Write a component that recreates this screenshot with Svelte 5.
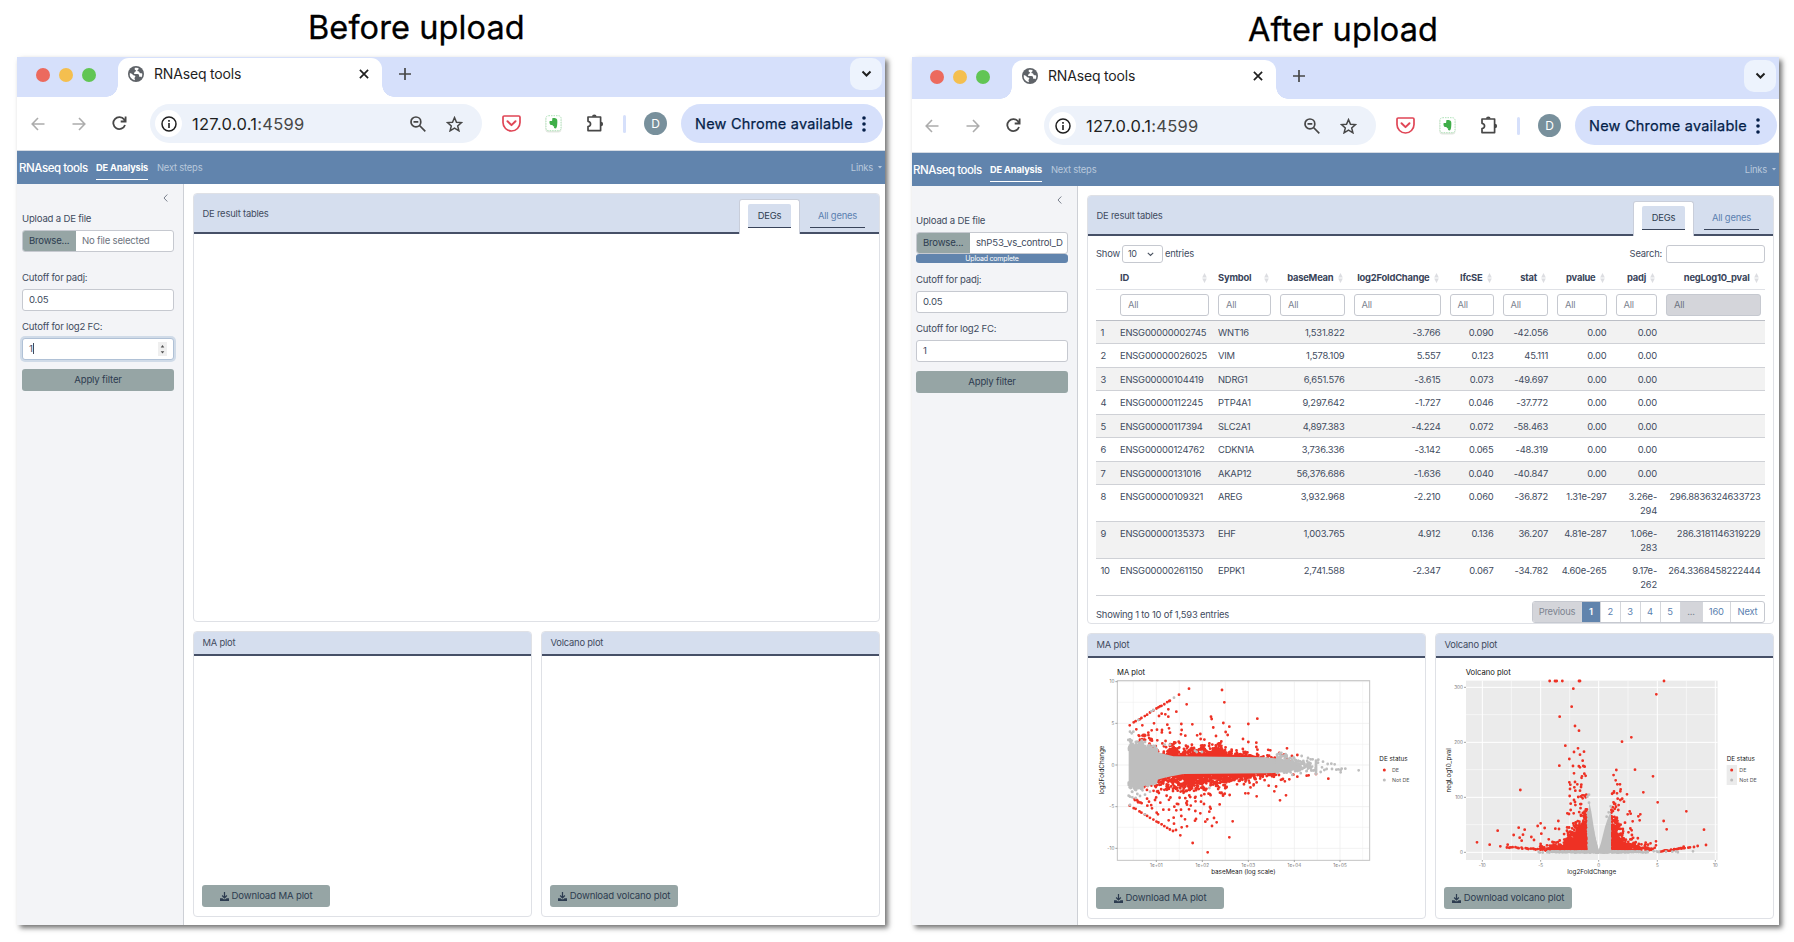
<script>
  const columns = [
    { name: 'ID', left: true },
    { name: 'Symbol', left: true },
    { name: 'baseMean' },
    { name: 'log2FoldChange' },
    { name: 'lfcSE' },
    { name: 'stat' },
    { name: 'pvalue' },
    { name: 'padj' },
    { name: 'negLog10_pval', off: true }
  ];

  const rows = [
    ['ENSG00000002745', 'WNT16', '1,531.822', '-3.766', '0.090', '-42.056', '0.00', '0.00', ''],
    ['ENSG00000026025', 'VIM', '1,578.109', '5.557', '0.123', '45.111', '0.00', '0.00', ''],
    ['ENSG00000104419', 'NDRG1', '6,651.576', '-3.615', '0.073', '-49.697', '0.00', '0.00', ''],
    ['ENSG00000112245', 'PTP4A1', '9,297.642', '-1.727', '0.046', '-37.772', '0.00', '0.00', ''],
    ['ENSG00000117394', 'SLC2A1', '4,897.383', '-4.224', '0.072', '-58.463', '0.00', '0.00', ''],
    ['ENSG00000124762', 'CDKN1A', '3,736.336', '-3.142', '0.065', '-48.319', '0.00', '0.00', ''],
    ['ENSG00000131016', 'AKAP12', '56,376.686', '-1.636', '0.040', '-40.847', '0.00', '0.00', ''],
    ['ENSG00000109321', 'AREG', '3,932.968', '-2.210', '0.060', '-36.872', '1.31e-297', '3.26e-294', '296.8836324633723'],
    ['ENSG00000135373', 'EHF', '1,003.765', '4.912', '0.136', '36.207', '4.81e-287', '1.06e-283', '286.3181146319229'],
    ['ENSG00000261150', 'EPPK1', '2,741.588', '-2.347', '0.067', '-34.782', '4.60e-265', '9.17e-262', '264.3368458222444']
  ];

  const pages = [
    { t: 'Previous', w: 49, k: 'mute' },
    { t: '1', w: 19, k: 'now' },
    { t: '2', w: 19.5 },
    { t: '3', w: 20 },
    { t: '4', w: 20 },
    { t: '5', w: 20 },
    { t: '...', w: 22, k: 'mute' },
    { t: '160', w: 28.5 },
    { t: 'Next', w: 33 }
  ];

  let seed = 7;
  function rnd() {
    seed = (seed * 1664525 + 1013904223) % 4294967296;
    return seed / 4294967296;
  }
  const expo = (mean) => -Math.log(1 - rnd() * 0.999) * mean;
  const gauss = () => rnd() + rnd() + rnd() + rnd() - 2;

  // Dots are merged into one path of zero-length round-capped strokes.
  const toPath = (pts) => pts.map(([x, y]) => `M${x.toFixed(1)} ${y.toFixed(1)}h0`).join('');

  function interp(table, x) {
    for (let i = 1; i < table.length; i++) {
      if (x <= table[i][0]) {
        const [x0, y0] = table[i - 1];
        const [x1, y1] = table[i];
        return y0 + ((y1 - y0) * (x - x0)) / (x1 - x0);
      }
    }
    return table[table.length - 1][1];
  }

  const maTop = [[146, 386], [180, 383], [215, 391], [250, 401], [280, 409], [560, 412], [610, 418], [660, 428]];
  const maBottom = [[146, 492], [185, 490], [220, 482], [260, 472], [310, 462], [560, 460], [610, 457], [660, 448]];

  const maRed = [
    [327, 206], [297, 224], [268, 243], [240, 259], [426, 210], [433, 247], [320, 253], [265, 268], [289, 275],
    [237, 288], [245, 281], [256, 283], [265, 290], [393, 290], [395, 297], [430, 309], [448, 320], [532, 296],
    [505, 312], [337, 313], [304, 312], [305, 330], [303, 343], [316, 347], [222, 310], [187, 316], [262, 314],
    [169, 328], [215, 331], [231, 329], [246, 330], [267, 325], [270, 338], [176, 346], [190, 345], [205, 338],
    [361, 342], [362, 357], [408, 348], [437, 336], [443, 345], [489, 357], [505, 366], [529, 368], [529, 381],
    [621, 385], [613, 403], [652, 405], [571, 391], [598, 399], [745, 476], [618, 526], [600, 541], [583, 514],
    [530, 529], [505, 520], [496, 520], [449, 525], [448, 652], [458, 604], [383, 697], [338, 669], [301, 646],
    [279, 633], [288, 630], [321, 619], [305, 622], [396, 618], [410, 607], [402, 594], [382, 598], [376, 605],
    [348, 597], [345, 602], [361, 580], [346, 573], [315, 598], [304, 588], [281, 593], [282, 611], [266, 601],
    [245, 613], [234, 583], [230, 578], [250, 569], [267, 569], [283, 560], [303, 569], [327, 568], [390, 561],
    [392, 566], [388, 575], [372, 552], [363, 545], [216, 565], [202, 557], [207, 545], [225, 540], [241, 548],
    [686, 466], [708, 462], [680, 467], [652, 470], [640, 464], [628, 478], [607, 478], [566, 497]
  ];
  const maGrey = [
    [836, 451], [796, 446], [782, 457], [785, 446], [775, 448], [764, 433], [754, 431], [743, 432], [729, 425],
    [756, 447], [769, 449], [740, 447], [726, 442], [715, 419], [714, 428], [782, 450], [733, 450], [722, 456],
    [698, 418], [684, 414], [665, 408], [282, 233], [220, 270], [214, 274], [175, 300], [150, 335], [160, 335],
    [155, 340], [150, 358], [145, 360], [155, 362], [185, 362], [195, 366], [221, 378], [254, 374], [270, 374],
    [146, 527], [150, 530], [157, 532], [167, 534], [172, 522], [180, 528], [195, 524], [210, 515], [150, 555],
    [195, 583], [345, 392], [350, 396], [366, 396], [388, 504]
  ];
  for (let i = 0; i < 15; i++) {
    const x = 148 + i * 8.5 + rnd() * 5;
    maRed.push([x, 315 - (x - 148) * 0.61 + rnd() * 2]);
    maRed.push([x, 555 + (x - 148) * 0.6 + rnd() * 2]);
  }
  for (let i = 0; i < 480; i++) {
    const x = 330 + gauss() * 150 + rnd() * 130;
    if (x < 205 || x > 640) continue;
    const mean = x < 260 ? 22 : x < 450 ? 14 : 7;
    const y = interp(maTop, x) + 3 - expo(mean);
    if (y > 318) maRed.push([x, y]);
  }
  for (let i = 0; i < 55; i++) {
    maRed.push([262 + rnd() * 28, 405 - rnd() * rnd() * 45]);
    maRed.push([405 + rnd() * 22, 405 - expo(12)]);
  }
  for (let i = 0; i < 950; i++) {
    const x = 320 + gauss() * 135 + rnd() * 130;
    if (x < 190 || x > 620) continue;
    const mean = x < 350 ? 23 : x < 440 ? 16 : 8;
    const y = interp(maBottom, x) - 3 + expo(mean);
    if (y < 575) maRed.push([x, y]);
  }
  for (let i = 0; i < 9; i++) maRed.push([162 + i * 2.5 + rnd() * 3, 536 + i * 1.6 + rnd() * 5]);
  for (let i = 0; i < 20; i++) maRed.push([172 + rnd() * 45, 345 + rnd() * 22]);
  for (let i = 0; i < 600; i++) {
    const x = 146 + rnd() * 85;
    const up = rnd() < 0.5;
    const s = x < 190 ? 7 : 4;
    maGrey.push([x, up ? interp(maTop, x) - Math.min(expo(s), 26) + 4 : interp(maBottom, x) + Math.min(expo(s), 28) - 4]);
  }
  for (let i = 0; i < 420; i++) {
    const x = 590 + Math.min(expo(40), 118);
    maGrey.push([x, 434 + (x - 590) * 0.05 + gauss() * (21 - (x - 590) * 0.05)]);
  }
  const maArea =
    'M' + maTop.map((p) => p.join(' ')).join('L') + 'L' + [...maBottom].reverse().map((p) => p.join(' ')).join('L') + 'Z';

  const vRed = [
    [362, 183], [378, 183], [383, 183], [400, 183], [450, 183], [453, 183], [705, 183], [433, 206], [428, 260],
    [392, 290], [438, 318], [450, 332], [409, 377], [447, 385], [435, 396], [465, 395], [453, 404], [421, 417],
    [461, 422], [391, 437], [432, 438], [453, 442], [463, 438], [467, 440], [435, 460], [466, 461], [459, 469],
    [682, 223], [607, 352], [579, 365], [618, 449], [562, 450], [672, 469], [643, 517], [686, 547], [772, 574],
    [704, 603], [713, 628], [825, 629], [831, 675], [806, 678], [560, 481], [565, 493], [573, 493], [594, 523],
    [575, 508], [574, 514], [555, 514], [564, 520], [566, 536], [574, 540], [585, 545], [561, 560], [602, 574],
    [605, 581], [596, 583], [634, 583], [628, 589], [632, 601], [611, 604], [588, 608], [274, 510], [144, 667],
    [206, 632], [182, 674], [214, 679], [236, 674], [269, 623], [287, 629], [254, 645], [282, 644], [272, 653],
    [335, 610], [326, 618], [337, 641], [347, 624], [388, 603], [379, 626], [307, 651], [315, 660], [278, 662],
    [421, 487], [424, 494], [438, 486], [445, 493], [457, 494], [423, 507], [436, 502], [439, 512], [453, 512],
    [422, 528], [460, 526], [461, 535], [472, 524], [470, 532], [435, 540], [425, 551], [438, 546], [415, 580],
    [425, 570], [420, 582], [434, 580], [681, 664], [650, 668], [657, 674], [681, 676], [608, 631], [778, 683],
    [764, 680], [795, 681], [783, 682]
  ];
  const vGrey = [
    [480, 524], [475, 530], [480, 548], [545, 559], [539, 577], [533, 590], [792, 694], [740, 694], [730, 695],
    [711, 695], [690, 696], [683, 694]
  ];
  for (let i = 0; i < 1150; i++) {
    const d = expo(33);
    const y = 690 - expo(Math.max(6, 27 - d * 0.25));
    if (d < 150 && y > 555) vRed.push([474 - d, y]);
  }
  for (let i = 0; i < 85; i++) vRed.push([473 - expo(14), 650 - expo(38)]);
  for (let i = 0; i < 430; i++) {
    const d = expo(27);
    const y = 690 - expo(Math.max(6, 27 - d * 0.25));
    if (d < 120 && y > 550) vRed.push([547 + d, y]);
  }
  for (let i = 0; i < 45; i++) vRed.push([547 + expo(9), 650 - expo(38)]);
  for (let i = 0; i < 24; i++) {
    const t = i / 24;
    vRed.push([232 + t * 140 + rnd() * 6, 679 + t * 12 + rnd() * 4]);
    vRed.push([695 + t * 75, 692 - t * 10 + rnd() * 4]);
  }
  for (let i = 0; i < 24; i++) vRed.push([610 + rnd() * 70, 691 - expo(6)]);
  for (let i = 0; i < 500; i++) {
    const left = rnd() < 0.55;
    const t = rnd();
    vGrey.push(left ? [477 + t * 28, 690 - rnd() * (1 - t) * 118] : [543 - t * 27, 690 - rnd() * (1 - t) * 95]);
  }
  for (let i = 0; i < 260; i++) vGrey.push([509 + gauss() * 135, 694 + rnd() * 4]);

  const charts = {
    ma: { title: 'MA plot', red: toPath(maRed), grey: toPath(maGrey) },
    volcano: { title: 'Volcano plot', red: toPath(vRed), grey: toPath(vGrey) }
  };
</script>

{#snippet sorter()}
  <svg class="sorter" viewBox="0 0 5 10"><path d="M2.5 0 4.8 4.600H.2zM2.500 10 4.800 5.400H.2z" fill="#dcdde1" /></svg>
{/snippet}

{#snippet chevron()}
  <svg width="11" height="8" viewBox="0 0 11 8"><path d="m1.5 1.5 4 4 4-4" fill="none" stroke="#1f1f1f" stroke-width="2" /></svg>
{/snippet}

{#snippet downloadButton(label)}
  <button class="grey-btn download">
    <svg width="9" height="9" viewBox="0 0 16 16"><path d="M8 0v10M3.8 6.2 8 10.4l4.2-4.2" fill="none" stroke="#2d3c50" stroke-width="2.2" /><path d="M0 11h4.4l2 2h3.2l2-2H16v5H0z" fill="#2d3c50" /></svg>
    <span>{label}</span>
  </button>
{/snippet}

{#snippet maChart()}
  <svg class="chart" viewBox="48 135 960 645">
    <text x="111" y="166" class="ct">MA plot</text>
    <g stroke="#ededed" stroke-width="2.4" fill="none">
      <path d="M112 185H868M112 310H868M112 435H868M112 560H868M112 685H868M229 182V720M367 182V720M505 182V720M643 182V720M780 182V720" />
      <path stroke-width="1.4" d="M112 247H868M112 373H868M112 497H868M112 622H868M160 182V720M298 182V720M436 182V720M574 182V720M712 182V720M848 182V720" />
    </g>
    <path d={charts.ma.red} class="dots" stroke="#ee3124" />
    <path d={maArea} fill="#bebebe" />
    <path d={charts.ma.grey} class="dots" stroke="#bebebe" />
    <rect x="112" y="182" width="757" height="539" fill="none" stroke="#c3c3c3" stroke-width="3" />
    <path d="M106 185h6M106 310h6M106 435h6M106 560h6M106 685h6M229 721v5M367 721v5M505 721v5M643 721v5M780 721v5" stroke="#777" stroke-width="2" />
    {#each [['10', 185], ['5', 310], ['0', 435], ['-5', 560], ['-10', 685]] as [t, y]}
      <text x="103" y={y + 5} class="tick" text-anchor="end">{t}</text>
    {/each}
    {#each [['1e+01', 229], ['1e+02', 367], ['1e+03', 505], ['1e+04', 643], ['1e+05', 780]] as [t, x]}
      <text {x} y="740" class="tick" text-anchor="middle">{t}</text>
    {/each}
    <text x="490" y="762" class="axis" text-anchor="middle">baseMean (log scale)</text>
    <text transform="translate(71 450) rotate(-90)" class="axis" text-anchor="middle">log2FoldChange</text>
    <text x="898" y="422" class="axis">DE status</text>
    <circle cx="913" cy="450" r="4.5" fill="#ee3124" />
    <circle cx="913" cy="480" r="4.5" fill="#bebebe" />
    <text x="936" y="456" class="key">DE</text>
    <text x="936" y="486" class="key">Not DE</text>
  </svg>
{/snippet}

{#snippet volcanoChart()}
  <svg class="chart" viewBox="45 135 960 645">
    <text x="110" y="166" class="ct">Volcano plot</text>
    <rect x="111" y="182" width="755" height="538" fill="#ebebeb" />
    <g stroke="#fff" stroke-width="3" fill="none">
      <path d="M111 202H866M111 367H866M111 532H866M111 697H866M160 182V720M335 182V720M509 182V720M685 182V720M859 182V720" />
      <path stroke-width="1.6" d="M111 284H866M111 449H866M111 614H866M247 182V720M422 182V720M597 182V720M772 182V720" />
    </g>
    <path d={charts.volcano.red} class="dots" stroke="#ee3124" />
    <path d="M476 698V600L481 545 487 575 494 620 502 665 509 690 516 668 528 620 538 590 546 575V698Z" fill="#bebebe" />
    <path d="M365 690.5H625V699H365Z" fill="#bebebe" />
    <path d={charts.volcano.grey} class="dots" stroke="#bebebe" />
    <path d="M105 202h6M105 367h6M105 532h6M105 697h6M160 720v5M335 720v5M509 720v5M685 720v5M859 720v5" stroke="#777" stroke-width="2" />
    {#each [['300', 202], ['200', 367], ['100', 532], ['0', 697]] as [t, y]}
      <text x="102" y={y + 5} class="tick" text-anchor="end">{t}</text>
    {/each}
    {#each [['-10', 160], ['-5', 335], ['0', 509], ['5', 685], ['10', 859]] as [t, x]}
      <text {x} y="740" class="tick" text-anchor="middle">{t}</text>
    {/each}
    <text x="488" y="762" class="axis" text-anchor="middle">log2FoldChange</text>
    <text transform="translate(66 451) rotate(-90)" class="axis" text-anchor="middle">negLog10_pval</text>
    <text x="893" y="422" class="axis">DE status</text>
    <rect x="893" y="435" width="31" height="60" fill="#ebebeb" />
    <circle cx="908" cy="450" r="4.5" fill="#ee3124" />
    <circle cx="908" cy="480" r="4.5" fill="#bebebe" />
    <text x="931" y="456" class="key">DE</text>
    <text x="931" y="486" class="key">Not DE</text>
  </svg>
{/snippet}

{#snippet browser(after)}
  <section class="window" class:after>
    <div class="page">
      <div class="tabs">
        <div class="lights"><i class="r"></i><i class="y"></i><i class="g"></i></div>
        <div class="tab">
          <svg width="16" height="16" viewBox="0 0 16 16">
            <circle cx="8" cy="8" r="8" fill="#5f6368" />
            <path d="M7.1 1.8C6.2 2.6 6.6 3.9 7.6 4.2c.9.2.6 1.2-.2 1.4-1 .2-.8 1.2-1.3 1.7-.4.5.1.8.9.8h2.5c1.3 0 1.7.9 1.6 1.8-.1.8.6 1 1.2.8.8-.2 1.2.2 1.1.9A6.3 6.3 0 0 0 14.300 8c0-.7-.5-1-1.200-.8-1 .2-1.600-.2-1.700-1-.1-.7-.9-.8-1.500-.9-.7-.1-.7-1 0-1.500.8-.5.9-1.200.4-1.800a6.400 6.400 0 0 0-3.200-.2zM1.700 7.300c1.500-.1 2.400.5 3.200 1.500.6.8 1.600.7 2.100 1 .7.5.3 1.200-.2 1.600-.5.4-.3 1.200 0 1.700.2.500.1.900-.2 1.100A6.300 6.300 0 0 1 1.700 7.300z" fill="#fff" />
          </svg>
          <span>RNAseq tools</span>
          <svg width="10" height="10" viewBox="0 0 10 10"><path d="m.9.9 8.200 8.200M9.100.9.9 9.100" stroke="#1f1f1f" stroke-width="1.700" /></svg>
        </div>
        <svg class="plus" width="12" height="12" viewBox="0 0 12 12"><path d="M6 0v12M0 6h12" stroke="#474747" stroke-width="1.700" /></svg>
        <div class="drop">{@render chevron()}</div>
      </div>

      <div class="toolbar">
        <svg class="back" width="14" height="14" viewBox="0 0 14 14"><path d="M13.500 7H1.500M7 1 1.200 7 7 13" fill="none" stroke="#acacac" stroke-width="1.600" /></svg>
        <svg class="fwd" width="14" height="14" viewBox="0 0 14 14"><path d="M.5 7h12M7 1l5.800 6L7 13" fill="none" stroke="#acacac" stroke-width="1.600" /></svg>
        <svg class="reload" width="15" height="15" viewBox="0 0 15 15"><path d="M13 9A6 6 0 1 1 12.200 3.600L13.500 5M13.600.5v5H8.700" fill="none" stroke="#474747" stroke-width="1.800" /></svg>
        <div class="address">
          <div class="info"><svg width="16" height="16" viewBox="0 0 16 16"><circle cx="8" cy="8" r="7" fill="none" stroke="#1f1f1f" stroke-width="1.500" /><path d="M8 7v5M8 4v1.700" stroke="#1f1f1f" stroke-width="1.600" /></svg></div>
          <span>127.0.0.1<em>:4599</em></span>
          <svg class="mag" width="16" height="16" viewBox="0 0 16 16"><circle cx="5.900" cy="5.900" r="4.900" fill="none" stroke="#474747" stroke-width="1.700" /><path d="m9.500 9.500 5.800 5.800M3.500 5.900h4.800" stroke="#474747" stroke-width="1.700" /></svg>
          <svg width="17" height="16" viewBox="0 0 17 16"><path d="m8.500 1.600 2 4.600 5 .4-3.800 3.300 1.200 4.900-4.400-2.600-4.400 2.600 1.200-4.900L1.500 6.600l5-.4z" fill="none" stroke="#474747" stroke-width="1.500" /></svg>
        </div>
        <svg class="pocket" width="19" height="17" viewBox="0 0 19 17"><path d="M2.200 1h14.600c.8 0 1.200.4 1.200 1.200v5.300a8.500 8.500 0 0 1-17 0V2.200C1 1.400 1.400 1 2.200 1z" fill="none" stroke="#e04656" stroke-width="1.700" /><path d="m5.500 6.300 4 3.800 4-3.800" fill="none" stroke="#e04656" stroke-width="2" stroke-linecap="round" stroke-linejoin="round" /></svg>
        <svg class="ever" width="17" height="18" viewBox="0 0 17 18"><rect x=".4" y="1" width="16" height="16.600" rx="3" fill="#e4e8e2" /><rect x="1" y=".7" width="15" height="15" rx="2.500" fill="#fff" stroke="#a5dfb0" stroke-width=".9" stroke-dasharray="1.500 1" /><path d="M7.300 3.200c1.500-.5 3.500-.2 4.200.6 1 .5 1 3.200.7 5.600-.2 2-.4 4-2.100 4-1.200 0-1.600-1.600-.6-2.100-1 .3-1.900-.3-2-1.300-1.300.4-2.700-.3-2.900-1.800-.2-1-.1-1.900.1-2.300h2.200c.5-.2.300-1.700.4-2.700z" fill="#3fae49" /></svg>
        <svg class="puzzle" width="19" height="18" viewBox="0 0 19 18"><path d="M2 3h12.600v13.600H2v-4.100c3.400-.6 3.400-4.600 0-5.200z" fill="none" stroke="#474747" stroke-width="1.700" stroke-linejoin="round" /><path d="M6 2.800a2.300 2.300 0 0 1 4.600 0zM14.800 7.700a2.300 2.300 0 0 1 0 4.600z" fill="#474747" /></svg>
        <i class="rule"></i>
        <div class="avatar">D</div>
        <div class="update"><span>New Chrome available</span><svg width="4" height="16" viewBox="0 0 4 16"><g fill="#041e49"><circle cx="2" cy="2" r="1.800" /><circle cx="2" cy="8" r="1.800" /><circle cx="2" cy="14" r="1.800" /></g></svg></div>
      </div>

      <nav>
        <b class="brand">RNAseq tools</b>
        <span class="active">DE Analysis</span>
        <span class="next">Next steps</span>
        <span class="links">Links</span>
        <svg width="4" height="3" viewBox="0 0 4 3"><path d="M0 0h4L2 2.500z" fill="#b9c9dc" /></svg>
      </nav>

      <div class="content">
        <aside>
          <svg class="collapse" width="5" height="8" viewBox="0 0 5 8"><path d="M4.300.5 1 4l3.300 3.500" fill="none" stroke="#6b7280" stroke-width=".9" /></svg>
          <div class="label first">Upload a DE file</div>
          <div class="file"><span class="browse">Browse...</span><span class="name" class:chosen={after}>{after ? 'shP53_vs_control_D' : 'No file selected'}</span></div>
          <div class="progress" class:done={after}>{after ? 'Upload complete' : ''}</div>
          <div class="label">Cutoff for padj:</div>
          <div class="field">0.05</div>
          <div class="label second">Cutoff for log2 FC:</div>
          <div class="field" class:focus={!after}>
            <span>1</span>
            {#if !after}
              <i class="caret"></i>
              <svg class="spin" width="9" height="14" viewBox="0 0 9 14"><rect width="9" height="14" fill="#efefef" /><path d="M2.700 5.400h3.600L4.500 3zM2.700 9.300h3.600L4.500 11.600z" fill="#505050" /></svg>
            {/if}
          </div>
          <button class="grey-btn apply">Apply filter</button>
        </aside>

        <main>
          <article class="card results">
            <header class="tall">
              <span>DE result tables</span>
              <div class="pill current"><span>DEGs</span></div>
              <div class="pill"><span>All genes</span></div>
            </header>
            {#if after}
              <div class="table-box">
                <div class="controls">
                  <span>Show</span>
                  <div class="select">10<svg width="7" height="5" viewBox="0 0 7 5"><path d="m.8.8 2.700 2.700L6.200.8" fill="none" stroke="#4a5260" stroke-width="1.100" /></svg></div>
                  <span>entries</span>
                  <span class="search-label">Search:</span>
                  <div class="search"></div>
                </div>
                <div class="row head">
                  <div></div>
                  {#each columns as c}
                    <div class:left={c.left}><span>{c.name}</span>{@render sorter()}</div>
                  {/each}
                </div>
                <div class="row filters">
                  <div></div>
                  {#each columns as c}
                    <div><span class="filter" class:off={c.off}>All</span></div>
                  {/each}
                </div>
                {#each rows as r, i}
                  <div class="row data" class:odd={i % 2 === 0} class:double={i > 6}>
                    <div class="idx">{i + 1}</div>
                    {#each r as v, j}
                      <div class:left={j < 2}>{#if j === 7 && v.includes('-')}{v.split('-')[0]}-<br />{v.split('-')[1]}{:else}{v}{/if}</div>
                    {/each}
                  </div>
                {/each}
                <div class="foot">
                  <span>Showing 1 to 10 of 1,593 entries</span>
                  <div class="pages">
                    {#each pages as p}
                      <span class={p.k} style="width:{p.w}px">{p.t}</span>
                    {/each}
                  </div>
                </div>
              </div>
            {/if}
          </article>
          <div class="pair">
            <article class="card">
              <header>MA plot</header>
              {#if after}{@render maChart()}{/if}
              {@render downloadButton('Download MA plot')}
            </article>
            <article class="card">
              <header>Volcano plot</header>
              {#if after}{@render volcanoChart()}{/if}
              {@render downloadButton('Download volcano plot')}
            </article>
          </div>
        </main>
      </div>
    </div>
  </section>
{/snippet}

<div class="sheet">
  <div class="side">
    <h1>Before upload</h1>
    {@render browser(false)}
  </div>
  <div class="side late">
    <h1>After upload</h1>
    {@render browser(true)}
  </div>
</div>

<style>
  :global(body) { background: #fff; }
  .sheet, .sheet * { box-sizing: border-box; }
  .sheet {
    display: flex; gap: 27px; width: 1794px; height: 942px; padding-left: 17px; overflow: hidden;
    font-family: Inter, sans-serif; font-size: 9.400px; letter-spacing: -0.2px; line-height: 14px; color: #414b5e;
  }
  svg { display: block; flex: none; }
  i { font-style: normal; }
  .side { width: 868px; }
  .late { width: 867px; }
  h1 { margin: 0; height: 57px; padding-left: 291px; font-size: 32.500px; letter-spacing: 0.1px; line-height: 55px; font-weight: 400; color: #000; -webkit-text-stroke: 0.3px #000; white-space: nowrap; }
  .late h1 { padding-left: 336px; line-height: 59px; }
  .window { height: 868px; background: #d6e0fb; overflow: hidden; box-shadow: 3px 3px 5px rgba(0, 0, 0, 0.55); }
  .page { width: 868px; height: 868px; display: flex; flex-direction: column; }
  .after .page { margin-left: -1px; padding-top: 2px; }

  .tabs { display: flex; height: 40px; padding-top: 1px; flex: none; }
  .lights { display: flex; gap: 9px; padding: 10px 0 0 19px; width: 101px; }
  .lights i { width: 14px; height: 14px; border-radius: 50%; }
  .r { background: #ec6a5e; }
  .y { background: #f4bf4f; }
  .g { background: #61c554; }
  .tab { position: relative; display: flex; align-items: center; width: 264px; height: 39px; padding: 0 13px 7px 10px; background: #fff; border-radius: 11px 11px 0 0; }
  .tab::before, .tab::after { content: ''; position: absolute; bottom: 0; width: 12px; height: 12px; }
  .tab::before { left: -12px; background: radial-gradient(circle at 0 0, transparent 11.500px, #fff 12px); }
  .tab::after { right: -12px; background: radial-gradient(circle at 100% 0, transparent 11.500px, #fff 12px); }
  .tab span { margin: 0 auto 0 10px; font-size: 14px; color: #1f1f1f; letter-spacing: -0.17px; }
  .plus { margin: 10px 0 0 17px; }
  .drop { margin: 0 3px 0 auto; width: 32px; height: 32px; border-radius: 10px; background: #edf3fd; display: grid; place-items: center; }

  .toolbar { display: flex; align-items: center; height: 54px; padding-bottom: 0; background: #fff; border-bottom: 1px solid #d5dbe3; flex: none; }
  .back { margin-left: 14px; }
  .fwd { margin-left: 27px; }
  .reload { margin-left: 26px; }
  .address { display: flex; align-items: center; margin-left: 23px; width: 332px; height: 39px; border-radius: 20px; background: #edf2fa; padding: 0 19px 0 5px; }
  .info { width: 27px; height: 27px; border-radius: 50%; background: #fff; display: grid; place-items: center; }
  .address span { margin: 0 auto 0 10px; font-size: 16.500px; letter-spacing: 0.28px; line-height: 20px; color: #1f1f1f; }
  .address em { font-style: normal; color: #474747; }
  .mag { margin-right: 20px; }
  .pocket { margin-left: 20px; }
  .ever { margin-left: 24px; }
  .puzzle { margin: -2px 0 0 24px; }
  .rule { width: 3px; height: 18px; margin-left: 18px; background: #d6e0fb; border-radius: 2px; }
  .avatar { width: 23px; height: 23px; margin-left: 18px; border-radius: 50%; background: #78909c; color: #fff; font-size: 12px; line-height: 23px; text-align: center; }
  .update { display: flex; align-items: center; width: 202px; height: 39px; margin: 0 2px 0 auto; padding: 0 17px 0 14px; border-radius: 20px; background: #d6e0fb; color: #041e49; font-size: 14.500px; letter-spacing: 0.22px; font-weight: 400; -webkit-text-stroke: 0.25px #041e49; white-space: nowrap; }
  .update svg { margin-left: auto; }

  nav { display: flex; align-items: center; height: 33px; padding: 0 3px 0 2px; background: #6184ad; color: #b9c9dc; flex: none; }
  .brand { width: 77px; font-size: 11.500px; letter-spacing: -0.450px; font-weight: 500; color: #fff; white-space: nowrap; }
  .active { height: 23px; padding-top: 5px; width: 52px; border-bottom: 1px solid #fff; color: #fff; font-size: 9.200px; letter-spacing: -0.1px; font-weight: 700; white-space: nowrap; margin-top: 1px; line-height: 12px; }
  .next { margin: 0 auto 0 9px; }
  .links { margin-right: 5px; }

  .content { display: flex; flex: 1; min-height: 0; background: #fff; }
  aside { width: 167px; flex: none; padding: 10px 9px 0 5px; background: #f3f4f7; border-right: 1px solid #cdd0d6; }
  .collapse { margin: 0 6px 0 auto; }
  .label { height: 14px; font-size: 9.600px; white-space: nowrap; }
  .first { margin-top: 10px; }
  .second { margin-top: 9px; }
  .file { display: flex; height: 22px; margin-top: 4px; border: 1px solid #c6c9d0; border-radius: 3px; background: #fff; overflow: hidden; font-size: 9.600px; line-height: 20px; white-space: nowrap; }
  .browse { width: 53px; flex: none; background: #96a5a5; padding-left: 6px; color: #2d3c50; }
  .name { padding-left: 6px; color: #6d7480; }
  .chosen { color: #414b5e; }
  .progress { height: 9px; margin-bottom: 9.500px; border-radius: 3px; font-size: 7px; line-height: 9px; color: #fff; text-align: center; }
  .done { background: #6184ad; }
  .field { display: flex; align-items: center; height: 22px; margin-top: 4px; padding: 0 6px 0 6px; border: 1px solid #c6c9d0; border-radius: 3px; background: #fff; font-size: 9.600px; }
  .focus { border-color: #b0c1d6; box-shadow: 0 0 0 2px #d0dbe8; }
  .caret { width: 1px; height: 11px; background: #414b5e; }
  .spin { margin-left: auto; }
  .grey-btn { display: flex; align-items: center; justify-content: center; gap: 3px; height: 22px; padding: 0; border: 0; border-radius: 3px; background: #96a5a5; color: #2d3c50; font: 9.600px/22px Inter, sans-serif; letter-spacing: -0.15px; white-space: nowrap; }
  .apply { width: 152px; margin-top: 9px; }

  main { flex: 1; min-width: 0; padding: 9px 5px 0 9px; display: flex; flex-direction: column; gap: 9px; }
  .card { display: flex; flex-direction: column; border: 1px solid #dfe1e6; border-radius: 4px; background: #fff; overflow: hidden; }
  .results { height: 429px; }
  header { height: 25px; flex: none; margin: -1px -1px 0; padding-left: 9.500px; line-height: 24px; background: #d5deee; border-bottom: 2px solid #465067; }
  .tall { display: flex; height: 41px; line-height: 41px; padding-right: 5px; }
  .tall > span { margin-right: auto; }
  .pill { display: flex; margin-top: 6px; width: 75px; height: 35px; padding: 5px 9px 0; }
  .pill span { flex: 1; height: 24px; border-bottom: 1.500px solid #39445a; text-align: center; line-height: 23px; color: #5b81b0; }
  .current { width: 61px; background: #fff; border-radius: 3px 3px 0 0; border: 1px solid #c9ceda; border-width: 1px 1px 0; padding: 4px 8px 0; }
  .current span { background: #d5deee; color: #2d3c50; border-radius: 2px 2px 0 0; }
  .pill:not(.current) span { margin: 0 1px; }
  .pair { display: flex; gap: 9px; height: 286px; }
  .pair .card { flex: 1; min-width: 0; }
  .download { width: 128px; margin: auto 0 9px 8px; }
  .chart { width: 320px; height: 215px; margin: 7px 0 0 8px; letter-spacing: 0; }
  .dots { fill: none; stroke-width: 8.500; stroke-linecap: round; }
  .ct { font-size: 23px; fill: #111; }
  .axis { font-size: 19px; fill: #222; }
  .tick { font-size: 14px; fill: #777; }
  .key { font-size: 16px; fill: #555; }

  .table-box { display: flex; flex-direction: column; width: 669px; margin: 9px 0 0 8px; }
  .controls { display: flex; align-items: center; height: 18px; }
  .select { display: flex; align-items: center; justify-content: space-between; width: 41px; height: 18px; margin: 0 2px; padding: 0 8px 0 5px; border: 1px solid #c6c9d0; border-radius: 3px; font-size: 9px; }
  .search-label { margin-left: auto; }
  .search { width: 99px; height: 18px; margin-left: 4px; border: 1px solid #c6c9d0; border-radius: 3px; }
  .row { display: grid; grid-template-columns: 19.500px 98px 62px 73.500px 96px 53px 54.500px 58.500px 50.500px 103.500px; }
  .row > div { padding: 0 4.500px; min-width: 0; }
  .head { height: 27px; align-items: center; border-bottom: 1px solid #dfe1e6; padding-top: 3px; font-weight: 700; color: #39445a; }
  .head > div { display: flex; align-items: center; justify-content: flex-end; gap: 4px; padding-right: 6.500px; white-space: nowrap; }
  .head > .left { justify-content: space-between; }
  .sorter { width: 5px; height: 10px; }
  .filters { height: 31px; padding-top: 4px; border-bottom: 1px solid #bcbfc6; }
  .filter { display: block; height: 22px; padding-left: 7px; border: 1px solid #c6c9d0; border-radius: 3px; line-height: 20px; color: #7d8490; }
  .off { background: #d4d5da; color: #6d7480; }
  .data { height: 23.450px; line-height: 14px; padding-top: 4.900px; border-bottom: 1px solid #cfd1d6; text-align: right; }
  .data > .left, .data > .idx { text-align: left; }
  .double { height: 37.050px; }
  .odd { background: #f2f2f2; }
  .foot { display: flex; justify-content: space-between; margin-top: 4.500px; line-height: 28px; white-space: nowrap; }
  .pages { display: flex; width: 233px; height: 22px; border: 1px solid #c6c9d0; border-radius: 3px; line-height: 20px; overflow: hidden; }
  .pages span { flex: none; text-align: center; color: #5b81b0; border-right: 1px solid #d5d7dc; }
  .pages span:last-child { border: 0; }
  .pages .mute { background: #d4d5da; color: #7d8490; }
  .pages .now { background: #6184ad; color: #fff; font-weight: 600; }
</style>
